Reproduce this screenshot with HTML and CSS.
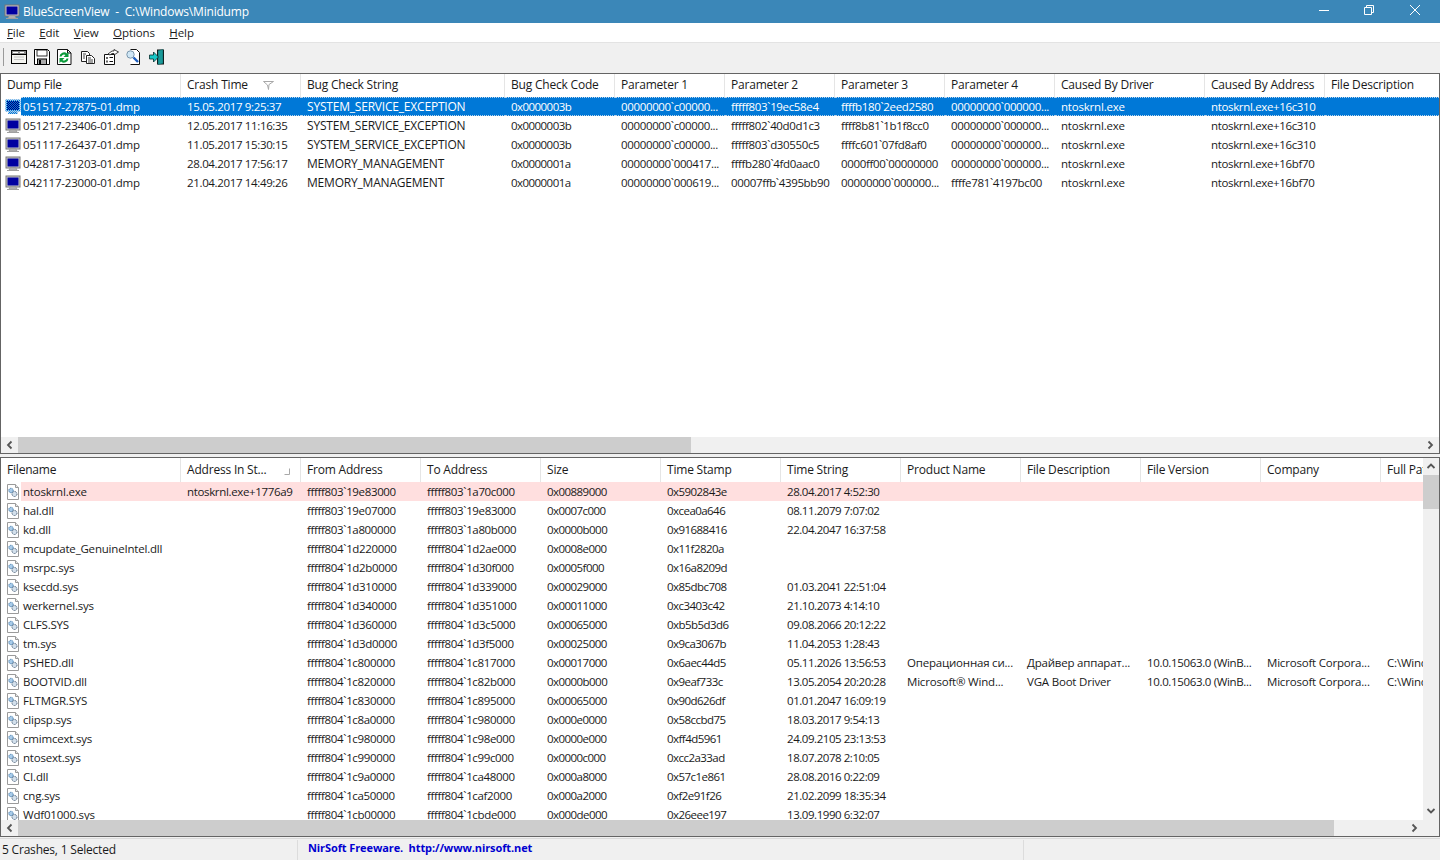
FILE: index.html
```html
<!DOCTYPE html>
<html lang="en">
<head>
<meta charset="utf-8">
<title>BlueScreenView</title>
<link rel="stylesheet" href="styles.css">
</head>
<body>
<svg class="defs" width="0" height="0" aria-hidden="true">
  <defs>
    <pattern id="dither" width="2" height="2" patternUnits="userSpaceOnUse">
      <rect width="2" height="2" fill="#0078d7"/>
      <rect width="1" height="1" fill="#00007a"/>
      <rect x="1" y="1" width="1" height="1" fill="#00007a"/>
    </pattern>
    <pattern id="ditherlight" width="2" height="2" patternUnits="userSpaceOnUse">
      <rect width="2" height="2" fill="#0078d7"/>
      <rect width="1" height="1" fill="#9cc4e8"/>
      <rect x="1" y="1" width="1" height="1" fill="#9cc4e8"/>
    </pattern>
  </defs>
  <symbol id="monitor" viewBox="0 0 16 16">
    <rect x="1" y="1" width="14" height="11" fill="#c9c9c9" stroke="#777"/>
    <rect x="2.500" y="2.500" width="11" height="8" fill="#0000a0"/>
    <path d="M5 12h6l1 2H4z" fill="#bcbcbc" stroke="#8a8a8a" stroke-width=".6"/>
    <path d="M2 14.500h12" stroke="#a0a0a0"/>
  </symbol>
  <symbol id="monitorsel" viewBox="0 0 16 16">
    <rect x=".5" y=".5" width="15" height="12" fill="url(#ditherlight)"/>
    <rect x="2" y="2" width="12" height="9" fill="url(#dither)"/>
    <path d="M4 12.500h8l1 2.500H3z" fill="url(#ditherlight)"/>
  </symbol>
  <symbol id="dll" viewBox="0 0 16 16">
    <path d="M2.500.5h8l3 3v12h-11z" fill="#fff" stroke="#9a9a9a"/>
    <path d="M10.500.5v3h3" fill="#e8e8e8" stroke="#9a9a9a"/>
    <circle cx="6" cy="6.500" r="2.200" fill="#a9cbe8" stroke="#3f79ad" stroke-dasharray="1.100 .6"/>
    <circle cx="9.500" cy="10" r="2.500" fill="#d3e0ec" stroke="#4a6078" stroke-dasharray="1.100 .6"/>
  </symbol>
</svg>

<header class="titlebar">
  <svg class="appicon" width="16" height="16" viewBox="0 0 16 16"><use href="#monitor"/></svg>
  <span class="titletext">BlueScreenView  -  C:\Windows\Minidump</span>
  <div class="winbtns">
    <svg width="46" height="22" viewBox="0 0 46 22"><path d="M19 10.500h10" stroke="#fff"/></svg>
    <svg width="46" height="22" viewBox="0 0 46 22"><path d="M18.500 7.500h7v7h-7zM20.500 7.500v-2h7v7h-2" fill="none" stroke="#fff"/></svg>
    <svg width="46" height="22" viewBox="0 0 46 22"><path d="M18 5l10 10M28 5L18 15" stroke="#fff" fill="none"/></svg>
  </div>
</header>

<nav class="menubar">
  <span class="menuitem"><u>F</u>ile</span>
  <span class="menuitem"><u>E</u>dit</span>
  <span class="menuitem"><u>V</u>iew</span>
  <span class="menuitem"><u>O</u>ptions</span>
  <span class="menuitem"><u>H</u>elp</span>
</nav>

<div class="toolbar">
  <i class="grip"></i>
  <svg class="tool" width="16" height="16" viewBox="0 0 16 16"><rect x=".5" y="1.500" width="15" height="13" fill="#f4f4f0" stroke="#000"/><rect x="1" y="2" width="14" height="3.500" fill="#8a8a8a"/><path d="M2 3.500h5M9 3.500h4" stroke="#fff"/><path d="M.5 5.500h15" stroke="#000"/><path d="M3 8h10M3 10.500h10" stroke="#c4c4c4"/></svg>
  <svg class="tool" width="16" height="16" viewBox="0 0 16 16"><path d="M.5.500h13l2 2v13H.5z" fill="#fff" stroke="#000"/><rect x="3" y="1" width="10" height="6" fill="#fff" stroke="#000" stroke-width=".8"/><rect x="3.500" y="10" width="9" height="5.500" fill="#aaa" stroke="#000"/><rect x="5" y="11" width="2" height="4" fill="#000"/></svg>
  <svg class="tool" width="16" height="16" viewBox="0 0 16 16"><path d="M.5.500h10l3.500 3.500v11.500H.5z" fill="#fff" stroke="#111"/><path d="M10.500.5v3.500h3.500" fill="none" stroke="#111"/><path d="M2.500 7.500a4.500 4.500 0 0 1 7.500-3L11.500 3v5H6.500l2-2A2.500 2.500 0 0 0 4.500 7.500z" fill="#0a9a3a"/><path d="M11.500 9.500a4.500 4.500 0 0 1-7.500 3L2.500 14V9h5l-2 2a2.500 2.500 0 0 0 4-1.500z" fill="#0a9a3a"/></svg>
  <svg class="tool" width="16" height="16" viewBox="0 0 16 16"><path d="M1.500 2.500h6l2 2v8h-8z" fill="#fff" stroke="#222"/><path d="M6.500 6.500h5l3 3v5h-8z" fill="#fff" stroke="#222"/><path d="M3 5h3M3 7h2M3 9h2M8 9h3M8 11h5M8 13h5" stroke="#444"/></svg>
  <svg class="tool" width="16" height="16" viewBox="0 0 16 16"><path d="M1.500 5.500h10v10h-10z" fill="#fff" stroke="#111"/><path d="M3 8h2v2H3zM3 11.500h2v2H3z" fill="#666"/><path d="M6.500 8.500h3.500M6.500 12.500h3.500" stroke="#111"/><path d="M5 5l4-3h2V.5L15.500 3 11 6V4.500H9L7 6z" fill="#fff" stroke="#111" stroke-width=".8"/></svg>
  <svg class="tool" width="16" height="16" viewBox="0 0 16 16"><path d="M4.500.5h6l3 3v12h-9" fill="#fff" stroke="#111"/><circle cx="4.500" cy="5.500" r="3.700" fill="#cfe6f5" stroke="#7a97ad"/><path d="M7.500 8.500l4.500 4.500" stroke="#1f5fc0" stroke-width="2.400"/></svg>
  <svg class="tool" width="16" height="16" viewBox="0 0 16 16"><path d="M8 .5h7v15H8z" fill="#111"/><path d="M9 1.500l5-1v14l-5 1z" fill="#1a9a9a" stroke="#0a5a5a" stroke-width=".5"/><path d="M.5 6H4.500V3l5 5-5 5v-3H.5z" fill="#16c8c8" stroke="#062c2c" stroke-width=".8"/></svg>
</div>

<main class="panels">
  <section class="panel upper">
    <div class="viewport">
      <table class="list dumps">
        <colgroup><col class="c-icon"><col class="c-name"><col class="w120"><col class="w204"><col class="w110"><col class="w110"><col class="w110"><col class="w110"><col class="w110"><col class="w150"><col class="w120"><col class="w120"></colgroup>
        <thead><tr>
          <th colspan="2">Dump File</th>
          <th>Crash Time<svg class="sort big" width="11" height="9" viewBox="0 0 11 9"><path d="M.5.500h10L6 3.500 5.500 8.500 4.500 4z" fill="#fff" stroke="#a8a8a8"/></svg></th>
          <th>Bug Check String</th><th>Bug Check Code</th><th>Parameter 1</th><th>Parameter 2</th><th>Parameter 3</th><th>Parameter 4</th><th>Caused By Driver</th><th>Caused By Address</th><th>File Description</th>
        </tr></thead>
        <tbody>
          <tr class="selected"><td class="ic"><svg width="16" height="16"><use href="#monitorsel"/></svg></td><td class="nm">051517-27875-01.dmp</td><td>15.05.2017 9:25:37</td><td>SYSTEM_SERVICE_EXCEPTION</td><td>0x0000003b</td><td>00000000`c00000...</td><td>fffff803`19ec58e4</td><td>ffffb180`2eed2580</td><td>00000000`000000...</td><td>ntoskrnl.exe</td><td>ntoskrnl.exe+16c310</td><td></td></tr>
          <tr><td class="ic"><svg width="16" height="16"><use href="#monitor"/></svg></td><td class="nm">051217-23406-01.dmp</td><td>12.05.2017 11:16:35</td><td>SYSTEM_SERVICE_EXCEPTION</td><td>0x0000003b</td><td>00000000`c00000...</td><td>fffff802`40d0d1c3</td><td>ffff8b81`1b1f8cc0</td><td>00000000`000000...</td><td>ntoskrnl.exe</td><td>ntoskrnl.exe+16c310</td><td></td></tr>
          <tr><td class="ic"><svg width="16" height="16"><use href="#monitor"/></svg></td><td class="nm">051117-26437-01.dmp</td><td>11.05.2017 15:30:15</td><td>SYSTEM_SERVICE_EXCEPTION</td><td>0x0000003b</td><td>00000000`c00000...</td><td>fffff803`d30550c5</td><td>ffffc601`07fd8af0</td><td>00000000`000000...</td><td>ntoskrnl.exe</td><td>ntoskrnl.exe+16c310</td><td></td></tr>
          <tr><td class="ic"><svg width="16" height="16"><use href="#monitor"/></svg></td><td class="nm">042817-31203-01.dmp</td><td>28.04.2017 17:56:17</td><td>MEMORY_MANAGEMENT</td><td>0x0000001a</td><td>00000000`000417...</td><td>ffffb280`4fd0aac0</td><td>0000ff00`00000000</td><td>00000000`000000...</td><td>ntoskrnl.exe</td><td>ntoskrnl.exe+16bf70</td><td></td></tr>
          <tr><td class="ic"><svg width="16" height="16"><use href="#monitor"/></svg></td><td class="nm">042117-23000-01.dmp</td><td>21.04.2017 14:49:26</td><td>MEMORY_MANAGEMENT</td><td>0x0000001a</td><td>00000000`000619...</td><td>00007ffb`4395bb90</td><td>00000000`000000...</td><td>ffffe781`4197bc00</td><td>ntoskrnl.exe</td><td>ntoskrnl.exe+16bf70</td><td></td></tr>
        </tbody>
      </table>
    </div>
    <div class="hscroll">
      <svg class="arrow" width="17" height="16" viewBox="0 0 17 16"><path d="M10.500 4.500L7 8l3.500 3.500" fill="none" stroke="#555" stroke-width="1.800"/></svg>
      <div class="thumb upper-thumb"></div>
      <div class="track"></div>
      <svg class="arrow" width="18" height="16" viewBox="0 0 18 16"><path d="M7.500 4.500L11 8l-3.500 3.500" fill="none" stroke="#555" stroke-width="1.800"/></svg>
    </div>
  </section>

  <section class="panel lower">
    <div class="lowerbody">
      <div class="viewport">
        <table class="list modules">
          <colgroup><col class="c-icon"><col class="c-name"><col class="w120"><col class="w120"><col class="w120"><col class="w120"><col class="w120"><col class="w120"><col class="w120"><col class="w120"><col class="w120"><col class="w120"><col class="w120"></colgroup>
          <thead><tr>
            <th colspan="2">Filename</th>
            <th>Address In St...<svg class="sort small" width="6" height="7" viewBox="0 0 6 7"><path d="M5.500.5v6H.5" fill="none" stroke="#a8a8a8"/></svg></th>
            <th>From Address</th><th>To Address</th><th>Size</th><th>Time Stamp</th><th>Time String</th><th>Product Name</th><th>File Description</th><th>File Version</th><th>Company</th><th>Full Path</th>
          </tr></thead>
          <tbody>
            <tr class="flagged"><td class="ic"><svg width="16" height="16"><use href="#dll"/></svg></td><td class="nm">ntoskrnl.exe</td><td>ntoskrnl.exe+1776a9</td><td>fffff803`19e83000</td><td>fffff803`1a70c000</td><td>0x00889000</td><td>0x5902843e</td><td>28.04.2017 4:52:30</td><td></td><td></td><td></td><td></td><td></td></tr>
            <tr><td class="ic"><svg width="16" height="16"><use href="#dll"/></svg></td><td class="nm">hal.dll</td><td></td><td>fffff803`19e07000</td><td>fffff803`19e83000</td><td>0x0007c000</td><td>0xcea0a646</td><td>08.11.2079 7:07:02</td><td></td><td></td><td></td><td></td><td></td></tr>
            <tr><td class="ic"><svg width="16" height="16"><use href="#dll"/></svg></td><td class="nm">kd.dll</td><td></td><td>fffff803`1a800000</td><td>fffff803`1a80b000</td><td>0x0000b000</td><td>0x91688416</td><td>22.04.2047 16:37:58</td><td></td><td></td><td></td><td></td><td></td></tr>
            <tr><td class="ic"><svg width="16" height="16"><use href="#dll"/></svg></td><td class="nm">mcupdate_GenuineIntel.dll</td><td></td><td>fffff804`1d220000</td><td>fffff804`1d2ae000</td><td>0x0008e000</td><td>0x11f2820a</td><td></td><td></td><td></td><td></td><td></td><td></td></tr>
            <tr><td class="ic"><svg width="16" height="16"><use href="#dll"/></svg></td><td class="nm">msrpc.sys</td><td></td><td>fffff804`1d2b0000</td><td>fffff804`1d30f000</td><td>0x0005f000</td><td>0x16a8209d</td><td></td><td></td><td></td><td></td><td></td><td></td></tr>
            <tr><td class="ic"><svg width="16" height="16"><use href="#dll"/></svg></td><td class="nm">ksecdd.sys</td><td></td><td>fffff804`1d310000</td><td>fffff804`1d339000</td><td>0x00029000</td><td>0x85dbc708</td><td>01.03.2041 22:51:04</td><td></td><td></td><td></td><td></td><td></td></tr>
            <tr><td class="ic"><svg width="16" height="16"><use href="#dll"/></svg></td><td class="nm">werkernel.sys</td><td></td><td>fffff804`1d340000</td><td>fffff804`1d351000</td><td>0x00011000</td><td>0xc3403c42</td><td>21.10.2073 4:14:10</td><td></td><td></td><td></td><td></td><td></td></tr>
            <tr><td class="ic"><svg width="16" height="16"><use href="#dll"/></svg></td><td class="nm">CLFS.SYS</td><td></td><td>fffff804`1d360000</td><td>fffff804`1d3c5000</td><td>0x00065000</td><td>0xb5b5d3d6</td><td>09.08.2066 20:12:22</td><td></td><td></td><td></td><td></td><td></td></tr>
            <tr><td class="ic"><svg width="16" height="16"><use href="#dll"/></svg></td><td class="nm">tm.sys</td><td></td><td>fffff804`1d3d0000</td><td>fffff804`1d3f5000</td><td>0x00025000</td><td>0x9ca3067b</td><td>11.04.2053 1:28:43</td><td></td><td></td><td></td><td></td><td></td></tr>
            <tr><td class="ic"><svg width="16" height="16"><use href="#dll"/></svg></td><td class="nm">PSHED.dll</td><td></td><td>fffff804`1c800000</td><td>fffff804`1c817000</td><td>0x00017000</td><td>0x6aec44d5</td><td>05.11.2026 13:56:53</td><td>Операционная си...</td><td>Драйвер аппарат...</td><td>10.0.15063.0 (WinB...</td><td>Microsoft Corpora...</td><td>C:\Windows\system32</td></tr>
            <tr><td class="ic"><svg width="16" height="16"><use href="#dll"/></svg></td><td class="nm">BOOTVID.dll</td><td></td><td>fffff804`1c820000</td><td>fffff804`1c82b000</td><td>0x0000b000</td><td>0x9eaf733c</td><td>13.05.2054 20:20:28</td><td>Microsoft® Wind...</td><td>VGA Boot Driver</td><td>10.0.15063.0 (WinB...</td><td>Microsoft Corpora...</td><td>C:\Windows\system32</td></tr>
            <tr><td class="ic"><svg width="16" height="16"><use href="#dll"/></svg></td><td class="nm">FLTMGR.SYS</td><td></td><td>fffff804`1c830000</td><td>fffff804`1c895000</td><td>0x00065000</td><td>0x90d626df</td><td>01.01.2047 16:09:19</td><td></td><td></td><td></td><td></td><td></td></tr>
            <tr><td class="ic"><svg width="16" height="16"><use href="#dll"/></svg></td><td class="nm">clipsp.sys</td><td></td><td>fffff804`1c8a0000</td><td>fffff804`1c980000</td><td>0x000e0000</td><td>0x58ccbd75</td><td>18.03.2017 9:54:13</td><td></td><td></td><td></td><td></td><td></td></tr>
            <tr><td class="ic"><svg width="16" height="16"><use href="#dll"/></svg></td><td class="nm">cmimcext.sys</td><td></td><td>fffff804`1c980000</td><td>fffff804`1c98e000</td><td>0x0000e000</td><td>0xff4d5961</td><td>24.09.2105 23:13:53</td><td></td><td></td><td></td><td></td><td></td></tr>
            <tr><td class="ic"><svg width="16" height="16"><use href="#dll"/></svg></td><td class="nm">ntosext.sys</td><td></td><td>fffff804`1c990000</td><td>fffff804`1c99c000</td><td>0x0000c000</td><td>0xcc2a33ad</td><td>18.07.2078 2:10:05</td><td></td><td></td><td></td><td></td><td></td></tr>
            <tr><td class="ic"><svg width="16" height="16"><use href="#dll"/></svg></td><td class="nm">CI.dll</td><td></td><td>fffff804`1c9a0000</td><td>fffff804`1ca48000</td><td>0x000a8000</td><td>0x57c1e861</td><td>28.08.2016 0:22:09</td><td></td><td></td><td></td><td></td><td></td></tr>
            <tr><td class="ic"><svg width="16" height="16"><use href="#dll"/></svg></td><td class="nm">cng.sys</td><td></td><td>fffff804`1ca50000</td><td>fffff804`1caf2000</td><td>0x000a2000</td><td>0xf2e91f26</td><td>21.02.2099 18:35:34</td><td></td><td></td><td></td><td></td><td></td></tr>
            <tr><td class="ic"><svg width="16" height="16"><use href="#dll"/></svg></td><td class="nm">Wdf01000.sys</td><td></td><td>fffff804`1cb00000</td><td>fffff804`1cbde000</td><td>0x000de000</td><td>0x26eee197</td><td>13.09.1990 6:32:07</td><td></td><td></td><td></td><td></td><td></td></tr>
          </tbody>
        </table>
      </div>
      <div class="vscroll">
        <svg width="16" height="17" viewBox="0 0 16 17"><path d="M4.500 10L8 6.500l3.500 3.500" fill="none" stroke="#555" stroke-width="1.800"/></svg>
        <div class="vthumb"></div>
        <div class="track"></div>
        <svg width="16" height="18" viewBox="0 0 16 18"><path d="M4.500 7L8 10.500 11.500 7" fill="none" stroke="#555" stroke-width="1.800"/></svg>
      </div>
    </div>
    <div class="hscroll">
      <svg class="arrow" width="17" height="16" viewBox="0 0 17 16"><path d="M10.500 4.500L7 8l3.500 3.500" fill="none" stroke="#555" stroke-width="1.800"/></svg>
      <div class="thumb lower-thumb"></div>
      <div class="track"></div>
      <svg class="arrow" width="18" height="16" viewBox="0 0 18 16"><path d="M7.500 4.500L11 8l-3.500 3.500" fill="none" stroke="#555" stroke-width="1.800"/></svg>
      <div class="corner"></div>
    </div>
  </section>
</main>

<footer class="statusbar">
  <div class="st-count">5 Crashes, 1 Selected</div>
  <div class="st-link">NirSoft Freeware.  http://www.nirsoft.net</div>
  <div class="st-rest"></div>
</footer>
</body>
</html>
```
FILE: styles.css
```css
* { box-sizing: border-box; }
html, body { margin: 0; padding: 0; height: 860px; overflow: hidden; }
body {
  display: flex;
  flex-direction: column;
  background: #f0f0f0;
  font-family: "Open Sans", "Noto Sans", sans-serif;
  font-size: 12px;
  letter-spacing: -.2px;
  color: #1a1a1a;
}
.defs { position: absolute; }

.titlebar {
  height: 23px;
  flex: none;
  display: flex;
  align-items: center;
  padding-left: 4px;
  background: #3b87b8;
  color: #fff;
}
.appicon { margin-right: 3px; }
.titletext { white-space: pre; flex: 1; }
.winbtns { display: flex; align-self: flex-start; padding-right: 2px; }
.winbtns svg { display: block; }

.menubar {
  height: 19px;
  flex: none;
  display: flex;
  align-items: center;
  background: #fff;
  padding-left: 7px;
  gap: 14.500px;
  font-size: 11.500px;
  letter-spacing: -.1px;
}

.toolbar {
  height: 31px;
  flex: none;
  display: flex;
  align-items: center;
  gap: 7px;
  padding-left: 3px;
  background: #f0f0f0;
  border-top: 1px solid #e3e3e3;
  padding-bottom: 2px;
}
.grip { width: 1px; height: 18px; background: #9a9a9a; }
.tool { display: block; }

.panels { flex: none; display: flex; flex-direction: column; }
.panel {
  display: flex;
  flex-direction: column;
  background: #fff;
  border: 1px solid #646464;
  width: 1440px;
}
.upper { height: 381px; margin-bottom: 3px; }
.lower { height: 380px; }
.lowerbody { flex: 1; display: flex; min-height: 0; }
.viewport { flex: 1; min-height: 0; min-width: 0; overflow: hidden; }

.list {
  border-collapse: separate;
  border-spacing: 0;
  table-layout: fixed;
  white-space: nowrap;
}
.dumps { width: 1444px; }
.modules { width: 1500px; }
.c-icon { width: 20px; }
.c-name { width: 160px; }
.w110 { width: 110px; }
.w120 { width: 120px; }
.w150 { width: 150px; }
.w204 { width: 204px; }

.list th {
  height: 23px;
  padding: 0 0 2px 6px;
  font-weight: 400;
  text-align: left;
  background: #fff;
  border-right: 1px solid #e5e5e5;
  overflow: hidden;
}
.modules th { height: 24px; padding-bottom: 1px; }
.list td {
  height: 19px;
  padding: 0 0 0 6px;
  overflow: hidden;
  line-height: 19px;
  font-size: 11.500px;
}
.list td.ic { padding: 0 0 0 4px; background: #fff; line-height: 0; }
.list td.ic svg { display: block; }
.list td.nm { padding-left: 2px; }

.dumps td:nth-child(3), .dumps td:nth-child(n+6):nth-child(-n+9), .dumps td:nth-child(11),
.modules td:nth-child(3), .modules td:nth-child(4), .modules td:nth-child(5), .modules td:nth-child(11) { letter-spacing: -.35px; }
.dumps td:nth-child(5), .modules td:nth-child(6), .modules td:nth-child(7) { letter-spacing: -.55px; }
.modules td:nth-child(8) { letter-spacing: -.45px; }
.dumps td:nth-child(4) { font-size: 12px; }

.selected td {
  background: #0078d7;
  color: #fff;
  line-height: 17px;
  border-top: 1px dotted #b9d4ec;
  border-bottom: 1px dotted #b9d4ec;
}
.list .selected td.ic { border-color: #fff; }
.flagged td { background: #ffdfdf; }

.sort { margin-left: 15px; vertical-align: -1px; }
.sort.small { margin-left: 18px; }

.hscroll { height: 16px; flex: none; display: flex; background: #f0f0f0; }
.arrow { flex: none; display: block; }
.thumb { background: #cdcdcd; flex: none; }
.upper-thumb { width: 673px; }
.lower-thumb { width: 1316px; }
.track { flex: 1; }
.corner { width: 16px; flex: none; }

.vscroll { width: 16px; flex: none; display: flex; flex-direction: column; background: #f0f0f0; }
.vscroll svg { display: block; flex: none; }
.vthumb { height: 34px; background: #cdcdcd; flex: none; }

.statusbar {
  flex: 1;
  display: flex;
  margin-top: 1px;
  border-top: 1px solid #d9d9d9;
  background: #f0f0f0;
  padding-top: 1px;
}
.st-count { width: 298px; padding: 1px 0 0 2px; border-right: 1px solid #dcdcdc; }
.st-link {
  width: 726px;
  padding: 0 0 0 10px;
  border-right: 1px solid #dcdcdc;
  white-space: pre;
  color: #0000d0;
  font-size: 11px;
  letter-spacing: -.1px;
  font-weight: 700;
}
.st-rest { flex: 1; }
```
